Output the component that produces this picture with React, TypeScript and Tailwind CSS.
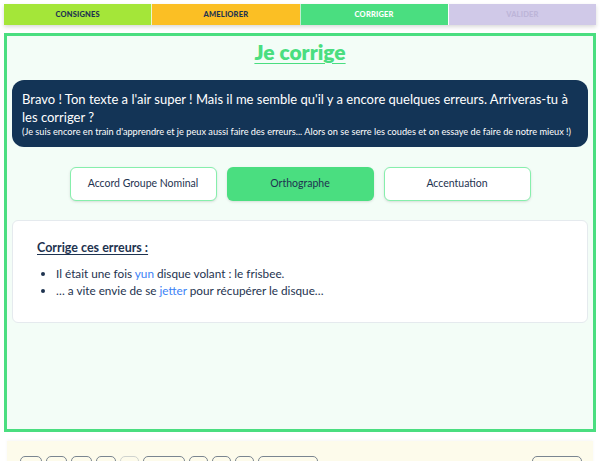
import React from 'react';

const font = { fontFamily: 'Lato, "Noto Sans", sans-serif' };

const Tabs: React.FC = () => {
  return (
    <div className="flex h-[21px] shadow-[0_2px_4px_rgba(0,0,0,0.15)]">
      <div className="flex-1 bg-[#a4e639] flex items-center justify-center text-[7.5px] font-black text-[#1e3350] tracking-wide">
        CONSIGNES
      </div>
      <div className="flex-1 bg-[#fbbf24] flex items-center justify-center text-[7.5px] font-black text-[#1e3350] border-l border-[#e8f7cf] tracking-wide">
        AMELIORER
      </div>
      <div className="flex-1 bg-[#4ade80] flex items-center justify-center text-[7.5px] font-black text-white border-l border-[#bff0cf] tracking-wide">
        CORRIGER
      </div>
      <div className="flex-1 bg-[#d0c9e8] flex items-center justify-center text-[7.5px] font-black text-[#bdb5d8] border-l border-white tracking-wide">
        VALIDER
      </div>
    </div>
  );
};

const SubTab: React.FC<{ label: string; active?: boolean }> = ({ label, active }) => (
  <button
    className={
      active
        ? 'w-[147px] h-[34px] rounded-md bg-[#4ade80] text-[10.5px] text-[#1e3350] shadow-sm'
        : 'w-[147px] h-[34px] rounded-md bg-white border border-[#86efac] text-[10.5px] text-[#1e3350] shadow-sm'
    }
  >
    {label}
  </button>
);

const ToolBtn: React.FC<{ w: string; faded?: boolean }> = ({ w, faded }) => (
  <div
    className={
      faded
        ? `${w} h-[24px] rounded-[5px] border border-[#cfd3cf] bg-[#fdfbeb]`
        : `${w} h-[24px] rounded-[5px] border border-[#7a8590] bg-[#fdfbeb]`
    }
  />
);

export default function App() {
  return (
    <div className="w-[600px] h-[461px] overflow-hidden bg-white p-1" style={font}>
      <Tabs />
      <div className="mt-2 h-[399px] border-[3px] border-[#4ade80] bg-[#f3fdf7] px-[5px] flex flex-col">
        <h1 className="text-center mt-[2px] text-[21px] leading-[28px] font-extrabold text-[#4ade80] underline underline-offset-[3px] decoration-[1px]">
          Je corrige
        </h1>
        <div className="mt-[14px] bg-[#133456] rounded-xl pl-[10px] pr-[4px] pt-[10px] pb-[9px] text-white">
          <p className="text-[13px] leading-[18px]">
            Bravo ! Ton texte a l'air super ! Mais il me semble qu'il y a encore quelques erreurs. Arriveras-tu à les corriger ?
          </p>
          <p className="text-[9.2px] leading-[12px]">
            (Je suis encore en train d'apprendre et je peux aussi faire des erreurs... Alors on se serre les coudes et on essaye de faire de notre mieux !)
          </p>
        </div>
        <div className="mt-[20px] flex justify-center gap-[10px]">
          <SubTab label="Accord Groupe Nominal" />
          <SubTab label="Orthographe" active />
          <SubTab label="Accentuation" />
        </div>
        <div className="mt-[19px] h-[103px] bg-white border border-[#e5eaee] rounded-md pl-[24px] pt-[19px]">
          <h2 className="text-[12.5px] leading-[16px] font-bold text-[#1e3350] underline underline-offset-[2px]">
            Corrige ces erreurs :
          </h2>
          <ul className="mt-[9px] list-disc pl-[19px] text-[11.75px] leading-[17px] text-[#1e3350]">
            <li>
              Il était une fois <span className="text-[#3b82f6]">yun</span> disque volant : le frisbee.
            </li>
            <li>
              … a vite envie de se <span className="text-[#3b82f6]">jetter</span> pour récupérer le disque…
            </li>
          </ul>
        </div>
      </div>
      <div className="mt-[9px] mx-[3px] h-[40px] bg-[#fdfbeb] pl-[13px] pr-[11px] pt-[15px] flex gap-[4px] shadow-[0_-1px_3px_rgba(0,0,0,0.04)]">
        <ToolBtn w="w-[22px]" />
        <ToolBtn w="w-[21px]" />
        <ToolBtn w="w-[21px]" />
        <ToolBtn w="w-[20px]" />
        <ToolBtn w="w-[19px]" faded />
        <ToolBtn w="w-[42px]" />
        <ToolBtn w="w-[19px]" />
        <ToolBtn w="w-[19px]" />
        <ToolBtn w="w-[19px]" />
        <ToolBtn w="w-[60px]" />
        <div className="flex-1" />
        <ToolBtn w="w-[50px]" />
      </div>
    </div>
  );
}
